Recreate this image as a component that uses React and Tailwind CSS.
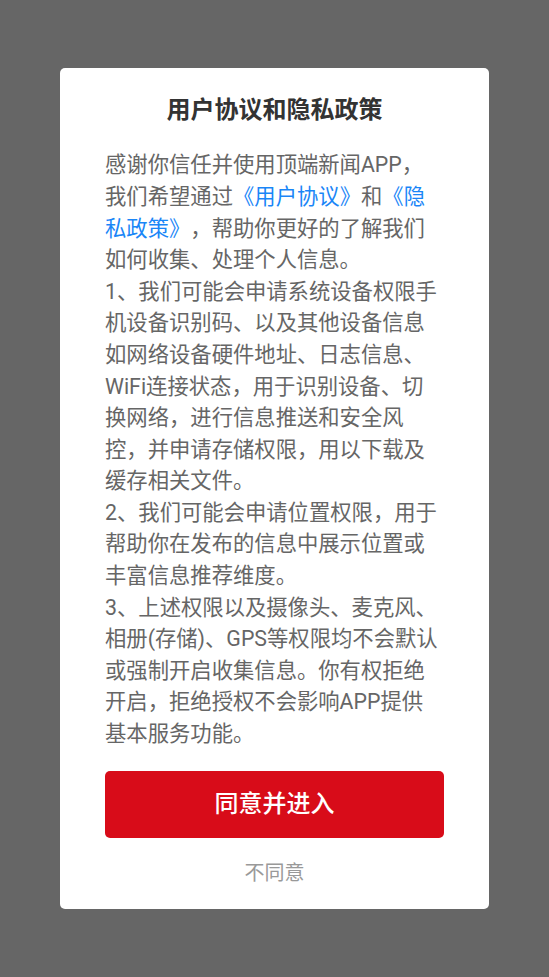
import React from "react";

const lines = [
  "感谢你信任并使用顶端新闻APP，",
  null, // line with links
  null,
  "如何收集、处理个人信息。",
  "1、我们可能会申请系统设备权限手",
  "机设备识别码、以及其他设备信息",
  "如网络设备硬件地址、日志信息、",
  "WiFi连接状态，用于识别设备、切",
  "换网络，进行信息推送和安全风",
  "控，并申请存储权限，用以下载及",
  "缓存相关文件。",
  "2、我们可能会申请位置权限，用于",
  "帮助你在发布的信息中展示位置或",
  "丰富信息推荐维度。",
  "3、上述权限以及摄像头、麦克风、",
  "相册(存储)、GPS等权限均不会默认",
  "或强制开启收集信息。你有权拒绝",
  "开启，拒绝授权不会影响APP提供",
  "基本服务功能。",
];

export default function App() {
  return (
    <div
      className="flex min-h-screen items-center justify-center bg-[#666666] [text-spacing-trim:space-all]"
      style={{ fontFamily: '"Roboto", "Noto Sans CJK SC", sans-serif' }}
    >
      <div className="w-[429px] rounded-[5px] bg-white px-[45px] pb-[21px] pt-[26px]">
        {/* Title */}
        <h1 className="text-center text-[24px] font-bold leading-[32px] text-[#333333]">
          用户协议和隐私政策
        </h1>

        {/* Body */}
        <div className="mt-[23px] whitespace-nowrap text-[21.33px] leading-[31.6px] text-[#666666]">
          {lines.map((line, i) => {
            if (i === 1) {
              return (
                <div key={i}>
                  我们希望通过<span className="text-[#1a86f7]">《用户协议》</span>和
                  <span className="text-[#1a86f7]">《隐</span>
                </div>
              );
            }
            if (i === 2) {
              return (
                <div key={i}>
                  <span className="text-[#1a86f7]">私政策》</span>，帮助你更好的了解我们
                </div>
              );
            }
            return <div key={i}>{line}</div>;
          })}
        </div>

        {/* Agree */}
        <button
          type="button"
          className="mt-[21px] flex h-[67px] w-full items-center justify-center rounded-[5px] bg-[#d80c19] text-[24px] font-medium text-white"
        >
          同意并进入
        </button>

        {/* Disagree */}
        <button
          type="button"
          className="mt-[20px] block w-full text-center text-[20px] leading-[30px] text-[#999999]"
        >
          不同意
        </button>
      </div>
    </div>
  );
}
